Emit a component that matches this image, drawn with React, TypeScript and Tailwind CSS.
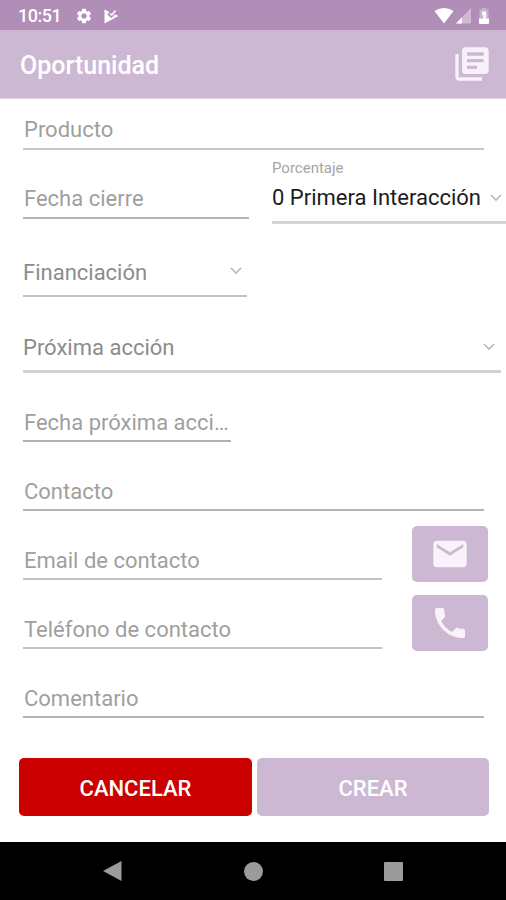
import React from "react";
import { MdLibraryBooks, MdEmail, MdPhone, MdSettings } from "react-icons/md";

type FieldProps = {
  label: string;
  box: string;
  text: string;
  chevron?: string;
};

function Chevron({ className }: { className: string }) {
  return (
    <svg className={`shrink-0 ${className}`} width="12" height="8" viewBox="0 0 12 8" fill="none" stroke="#b8b8b8" strokeWidth="1.6">
      <path d="M1 1l5 5 5-5" />
    </svg>
  );
}

function Field({ label, box, text, chevron }: FieldProps) {
  return (
    <div className={`flex items-end justify-between ${box}`}>
      <span className={`whitespace-nowrap text-[22px] leading-[26px] ${text}`}>{label}</span>
      {chevron && <Chevron className={chevron} />}
    </div>
  );
}

const hint = "pl-px text-[#9f9f9f]";

export default function App() {
  return (
    <div className="flex h-[900px] w-[506px] flex-col overflow-hidden bg-white font-[Roboto,sans-serif]">
      <div className="flex h-[30px] shrink-0 items-center bg-[#b18eb8] pt-[2px] text-white">
        <span className="ml-[18px] w-[57px] text-[18px] leading-5 font-medium tracking-[-0.5px]">10:51</span>
        <MdSettings size={18} />
        <svg className="ml-[11px]" width="16" height="15" viewBox="0 0 16 15">
          <path d="M.5.500L5 2.800L4.200 5.500L7.500 8L12 3L10.500 5L14.500 7L.5 14.500Z" fill="#fff" />
          <path d="M3.500 5l4 3.500L13 2.500" fill="none" stroke="#b18eb8" strokeWidth="1.100" />
          <path d="M6 4.500l1.800 1.500L11.500 1.500" fill="none" stroke="#fff" strokeWidth="1.500" />
        </svg>
        <svg className="mr-[2px] ml-auto" width="20" height="16" viewBox="0 0 20 16">
          <path d="M0.500 3Q10-3 19.500 3L10 15.500Z" fill="#fff" />
        </svg>
        <svg width="15" height="16" viewBox="0 0 15 16">
          <path d="M15 0V15.500H0Z" fill="#cfb9d3" />
          <path d="M6 9.300V15.500H0Z" fill="#fff" />
        </svg>
        <svg className="mr-[16px] ml-[7px] -mt-px" width="12" height="16" viewBox="0 0 12 16">
          <path d="M4 0h4v1.500h2.500v9h-9v-9H4Z" fill="#cbb2d0" />
          <path d="M8 4.500H5V6.500H7.200V9.500H5" fill="none" stroke="#fff" strokeWidth="1.800" />
          <path d="M1 10.500h10v4.500q0 1-1 1H2q-1 0-1-1Z" fill="#fff" />
        </svg>
      </div>
      <header className="flex h-[69px] shrink-0 items-center justify-between border-b border-[#dfd2e2] bg-[#cdb8d4] pr-[14px] pl-[20px]">
        <h1 className="pt-[3px] text-[25px] leading-[30px] font-medium text-white">Oportunidad</h1>
        <MdLibraryBooks size={40} color="#f8f1fa" />
      </header>

      <main className="flex h-[743px] shrink-0 flex-col pl-[23px]">
        <Field label="Producto" box="h-[51px] w-[461px] border-b-2 border-[#c8c8c8]" text={`pb-[5px] ${hint}`} />
        <div className="flex h-[74px] gap-[23px]">
          <Field label="Fecha cierre" box="h-[69px] w-[226px] border-b-2 border-[#b4b4b4]" text={`pb-[5px] ${hint}`} />
          <div className="flex w-[234px] flex-col border-b-[3px] border-[#d3d3d3] pt-[9px]">
            <span className="text-[15px] leading-[18px] text-[#a5a5a5]">Porcentaje</span>
            <div className="mt-[8px] flex items-center">
              <span className="w-[218px] whitespace-nowrap text-[22px] leading-[26px] text-[#1c1c1c]">0 Primera Interacción</span>
              <Chevron className="-mt-px" />
            </div>
          </div>
        </div>
        <Field label="Financiación" box="h-[73px] w-[224px] border-b-2 border-[#c3c3c3]" text="pb-[9px] text-[#8c8c8c]" chevron="mr-[5px] mb-[20px]" />
        <Field label="Próxima acción" box="h-[76px] w-[478px] border-b-[3px] border-[#d3d3d3]" text="pb-[9px] text-[#8c8c8c]" chevron="mr-[6px] mb-[19px]" />
        <Field label="Fecha próxima acci…" box="h-[69px] w-[208px] border-b-2 border-[#b0b0b0]" text={`pb-[4px] ${hint}`} />
        <Field label="Contacto" box="h-[69px] w-[461px] border-b-2 border-[#b4b4b4]" text={`pb-[4px] ${hint}`} />
        <div className="flex h-[69px] gap-[30px]">
          <Field label="Email de contacto" box="h-[69px] w-[359px] border-b-2 border-[#c3c3c3]" text={`pb-[4px] ${hint}`} />
          <button className="mt-[15px] flex h-[56px] w-[76px] items-center justify-center rounded-[5px] bg-[#cdb8d4] text-[#f8f3fa]">
            <MdEmail size={40} />
          </button>
        </div>
        <div className="flex h-[69px] gap-[30px]">
          <Field label="Teléfono de contacto" box="h-[69px] w-[359px] border-b-2 border-[#c3c3c3]" text={`pb-[4px] ${hint}`} />
          <button className="mt-[15px] flex h-[56px] w-[76px] items-center justify-center rounded-[5px] bg-[#cdb8d4] text-[#f8f3fa]">
            <MdPhone size={40} />
          </button>
        </div>
        <Field label="Comentario" box="h-[69px] w-[461px] border-b-2 border-[#b4b4b4]" text={`pb-[4px] ${hint}`} />
        <div className="mt-[40px] -ml-[4px] flex gap-[5px] text-[22px] font-medium text-white">
          <button className="h-[58px] w-[233px] rounded-[5px] bg-[#cb0000] pt-[2px]">CANCELAR</button>
          <button className="h-[58px] w-[232px] rounded-[5px] bg-[#cdb8d4] pt-[2px]">CREAR</button>
        </div>
      </main>

      <nav className="flex h-[58px] items-center bg-black">
        <svg className="ml-[103px]" width="19" height="20" viewBox="0 0 19 20">
          <path d="M18.500 0V20L0 10Z" fill="#9b9b9b" />
        </svg>
        <div className="ml-[122px] size-[19px] rounded-full bg-[#9b9b9b]" />
        <div className="ml-[121px] size-[19px] rounded-[1px] bg-[#9b9b9b]" />
      </nav>
    </div>
  );
}
